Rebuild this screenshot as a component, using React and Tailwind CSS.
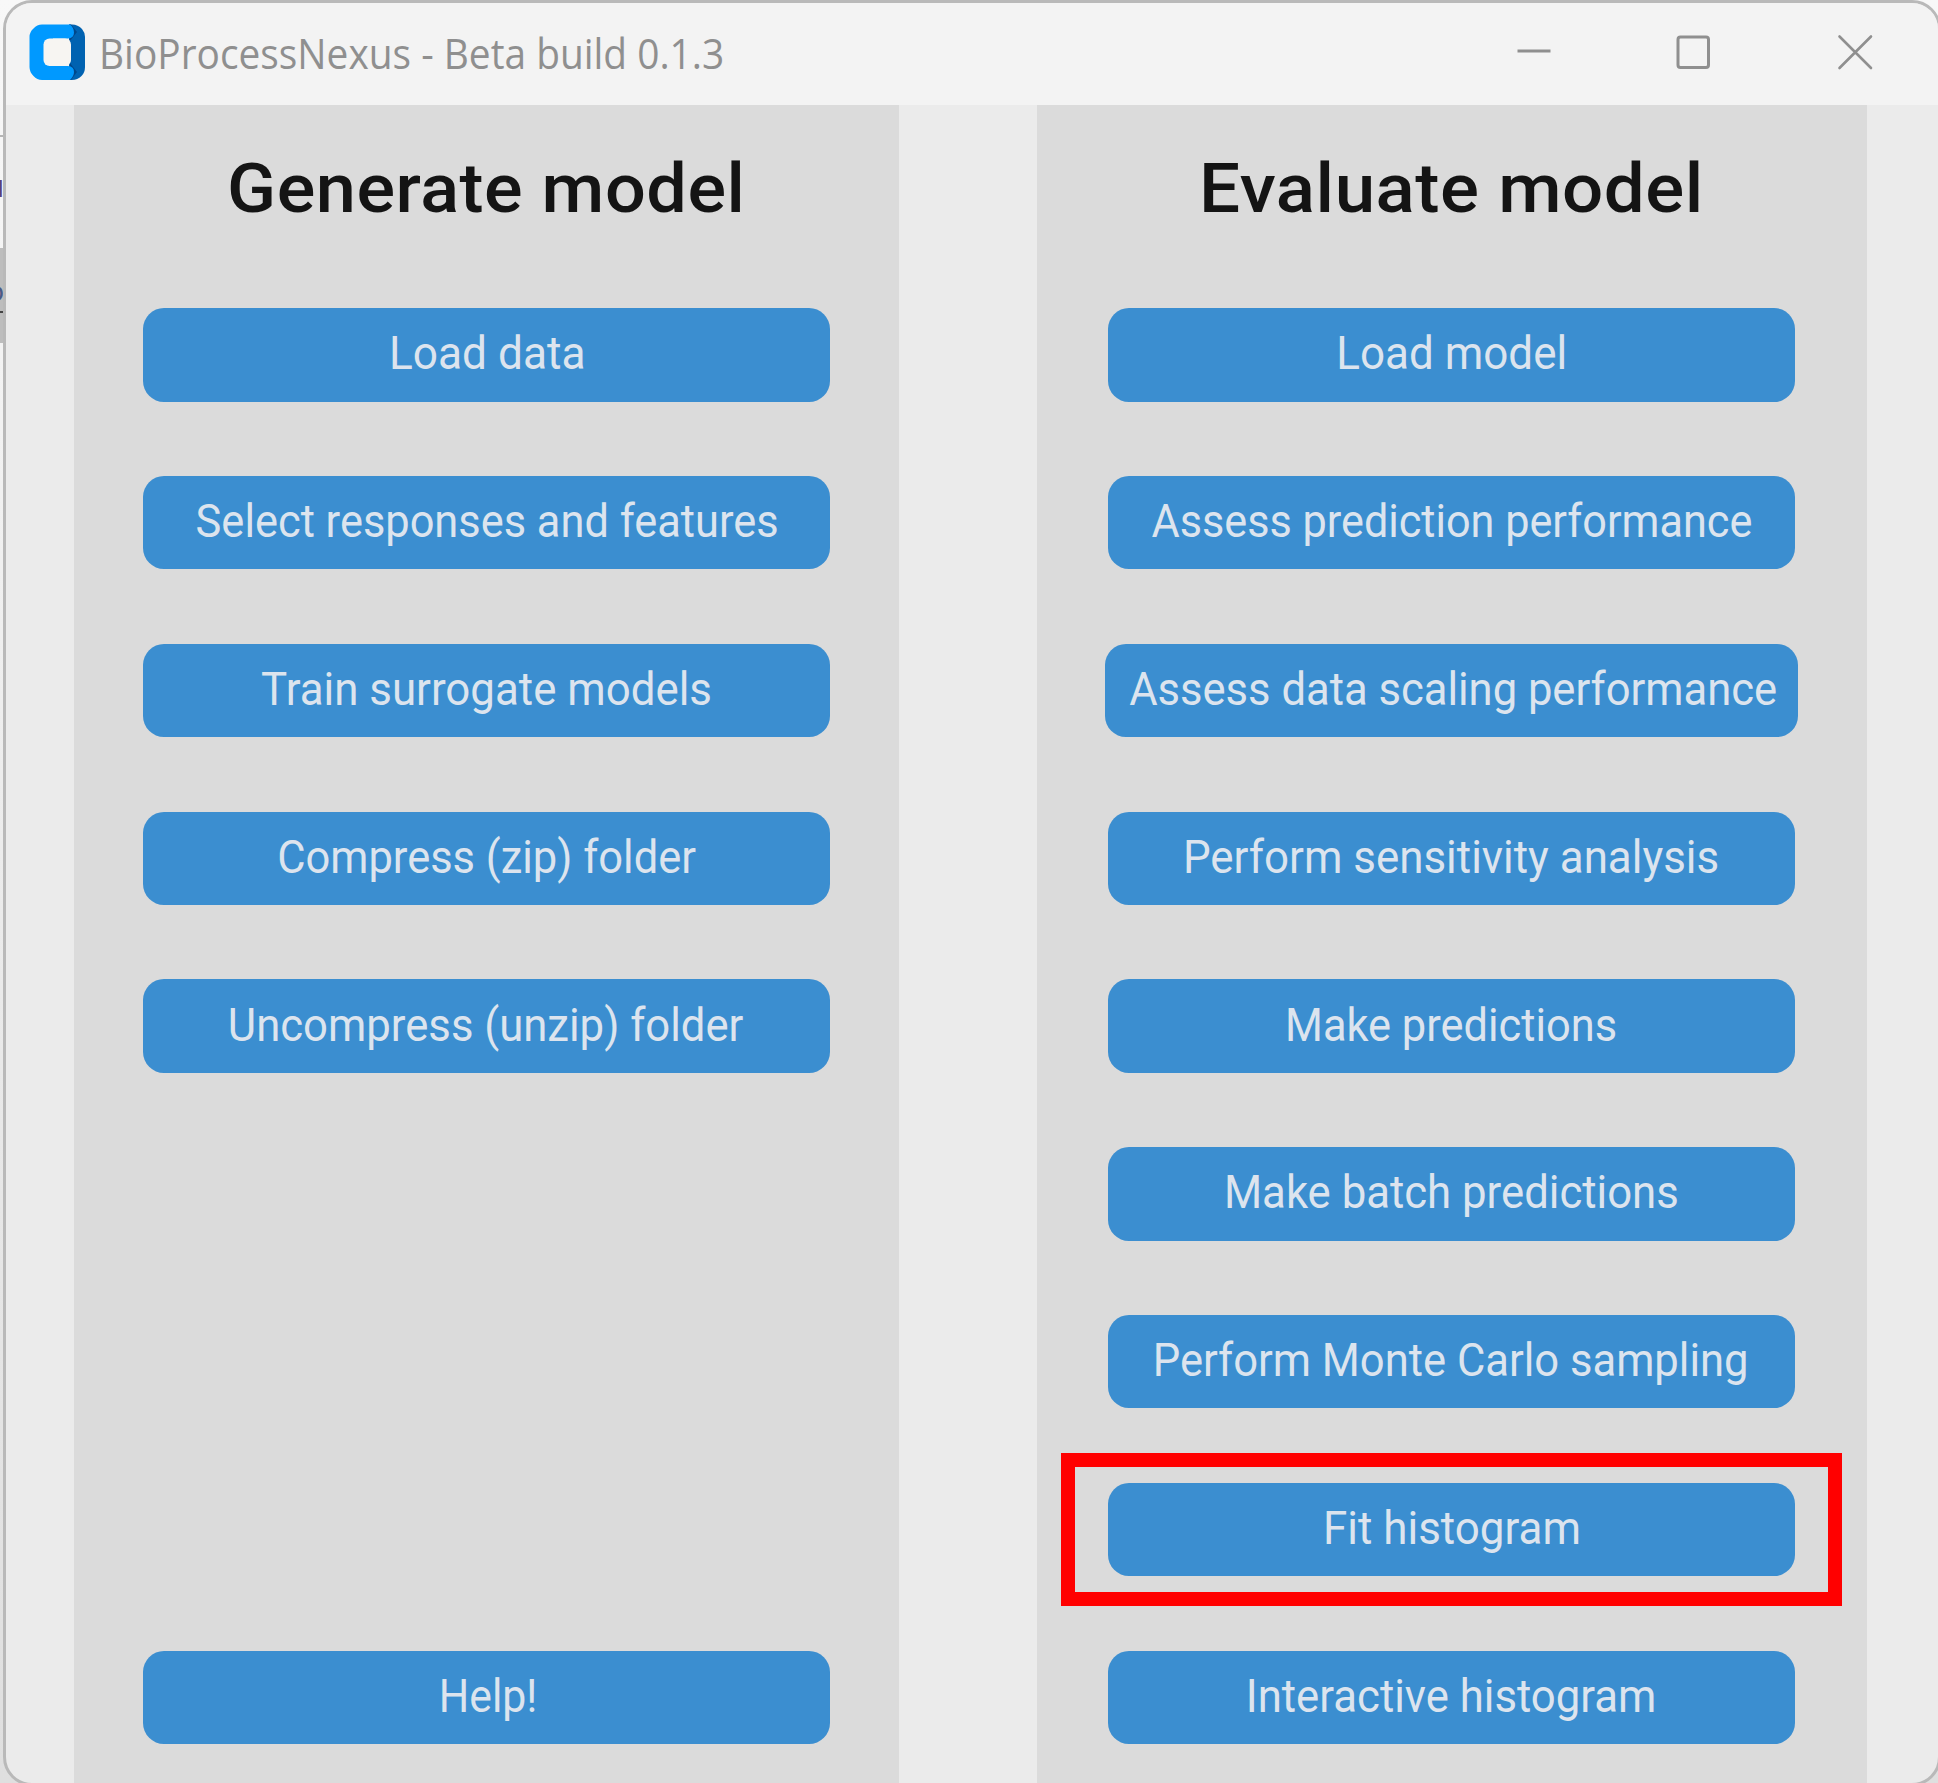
import React from "react";

const generateActions = [
  { label: "Load data", fit: "scale-x-[0.962] ml-[1px]" },
  { label: "Select responses and features", fit: "scale-x-[0.943] ml-[2px]" },
  { label: "Train surrogate models", fit: "scale-x-[0.953] ml-[1px]" },
  { label: "Compress (zip) folder", fit: "scale-x-[0.945] ml-[1px]" },
  { label: "Uncompress (unzip) folder", fit: "scale-x-[0.949] ml-[-1px]" },
  null,
  null,
  null,
  { label: "Help!", fit: "scale-x-[0.93] ml-[3px]" },
];

const evaluateActions = [
  { label: "Load model", fit: "scale-x-[0.956] ml-[1px]" },
  { label: "Assess prediction performance", fit: "scale-x-[0.939]" },
  { label: "Assess data scaling performance", fit: "scale-x-[0.947] ml-[3px]", wide: true },
  { label: "Perform sensitivity analysis", fit: "scale-x-[0.954] ml-[-1px]" },
  { label: "Make predictions", fit: "scale-x-[0.943]" },
  { label: "Make batch predictions", fit: "scale-x-[0.95] ml-[-1px]" },
  { label: "Perform Monte Carlo sampling", fit: "scale-x-[0.947] ml-[-1px]" },
  { label: "Fit histogram", fit: "scale-x-[0.955] ml-[2px]", highlighted: true },
  { label: "Interactive histogram", fit: "scale-x-[0.95] ml-[-1px]" },
];

function AppIcon() {
  return (
    <svg width="57" height="57" viewBox="0 0 57 57" className="shrink-0">
      <path
        d="M40 0.5H43Q49 0.5 53 5Q56 8.500 56 13V43Q56 48.500 52.500 52Q48.500 56 43 56H40Z"
        fill="#0062b1"
      />
      <path d="M40 .5H42L48 8L41 17ZM41 39L48 48L42 56H40Z" fill="#00478a" />
      <path
        d="M13 0.5H41Q45 4 45 8.500Q45 14 39 14.500H14V42H39Q45 42.500 45 48Q45 52 41 56H13Q8 56 4.500 52Q0.500 48 0.500 43V13Q0.500 8 4.500 4.500Q8 0.500 13 0.500Z"
        fill="#0099ff"
      />
      <path d="M14 14H24V42H14Z" fill="#0099ff" />
      <rect x="14.500" y="14.500" width="27.500" height="27.500" rx="6" fill="#f7f5f2" />
    </svg>
  );
}

function TitleBar() {
  return (
    <header className="flex h-[102px] shrink-0 items-start bg-[#f3f3f3]">
      <div className="flex grow items-start pt-[21px] pl-[23px]">
        <AppIcon />
        <h1 className="mt-[1px] ml-[12.500px] origin-left scale-x-[0.936] whitespace-nowrap font-['Open_Sans',sans-serif] text-[41.500px] leading-[56px] text-[#8f8f8f]">
          BioProcessNexus - Beta build 0.1.3
        </h1>
      </div>
      <div className="flex pt-[31px] pr-[65px] text-[#8f8f8f]">
        <svg width="36" height="36" viewBox="0 0 36 36" fill="none" stroke="currentColor">
          <path d="M2.500 17H35.500" strokeWidth="3" />
        </svg>
        <svg width="36" height="36" viewBox="0 0 36 36" fill="none" stroke="currentColor" className="ml-[124px]">
          <rect x="3" y="3" width="30.500" height="30.500" rx="2.500" strokeWidth="3" />
        </svg>
        <svg width="36" height="36" viewBox="0 0 36 36" fill="none" stroke="currentColor" className="ml-[126px]">
          <path d="M2.500 2.500L34 34M34 2.500L2.500 34" strokeWidth="2.600" strokeLinecap="round" />
        </svg>
      </div>
    </header>
  );
}

function ActionButton({ action }) {
  return (
    <div className="relative flex h-[167.800px] w-full shrink-0 items-center justify-center">
      {action && (
        <button
          className={`flex h-[93.400px] items-center justify-center rounded-[21px] bg-[#3b8ed0] pb-[3px] ${
            action.wide ? "w-[693px]" : "w-[687px]"
          }`}
        >
          <span className={`whitespace-nowrap text-[46px] leading-none text-[#dce4ee] ${action.fit}`}>
            {action.label}
          </span>
        </button>
      )}
      {action?.highlighted && (
        <div className="pointer-events-none absolute top-[7px] left-[24.500px] h-[153px] w-[781px] border-[14px] border-[#ff0000]" />
      )}
    </div>
  );
}

function Panel({ title, titleFit, actions, className }) {
  return (
    <section className={`flex shrink-0 flex-col items-center bg-[#dbdbdb] ${className}`}>
      <h2 className="flex h-[166px] w-full shrink-0 items-center justify-center">
        <span
          className={`whitespace-nowrap text-[69px] leading-none font-medium tracking-[0.5px] text-[#141414] ${titleFit}`}
        >
          {title}
        </span>
      </h2>
      {actions.map((action, index) => (
        <ActionButton key={index} action={action} />
      ))}
    </section>
  );
}

/* Sliver of the window that lies behind this one. */
function BackgroundSliver() {
  return (
    <div className="flex h-full w-[3px] shrink-0 flex-col pt-[135px]">
      <div className="h-[2px] bg-[#b5b5b5]" />
      <div className="mt-[34px] flex h-[30px] w-[4px] justify-end overflow-hidden text-[32px] leading-[30px] text-[#5b3f78]">
        u
      </div>
      <div className="mt-[47px] h-[95px] bg-[#bdbdbd] pt-[30px]">
        <div className="flex h-[28px] w-[4px] justify-end overflow-hidden text-[28px] leading-[28px] text-[#4a5a86]">
          o
        </div>
        <div className="mt-[5px] h-[2px] bg-[#444444]" />
      </div>
    </div>
  );
}

export default function App() {
  return (
    <div className="flex h-[1783px] w-[1938px] overflow-hidden bg-linear-to-b from-[#f8f8f8] to-[#dfdfdf] font-[Roboto,sans-serif]">
      <BackgroundSliver />
      <div className="flex h-[1786px] w-[1938px] shrink-0 flex-col overflow-hidden rounded-[29px] border-[3px] border-[#b9b9b9] bg-[#ebebeb]">
        <TitleBar />
        <main className="flex grow pl-[68px]">
          <Panel
            title="Generate model"
            titleFit="scale-x-[1.044]"
            actions={generateActions}
            className="w-[825px]"
          />
          <Panel
            title="Evaluate model"
            titleFit="scale-x-[1.054]"
            actions={evaluateActions}
            className="ml-[137.500px] w-[830px]"
          />
        </main>
      </div>
    </div>
  );
}
